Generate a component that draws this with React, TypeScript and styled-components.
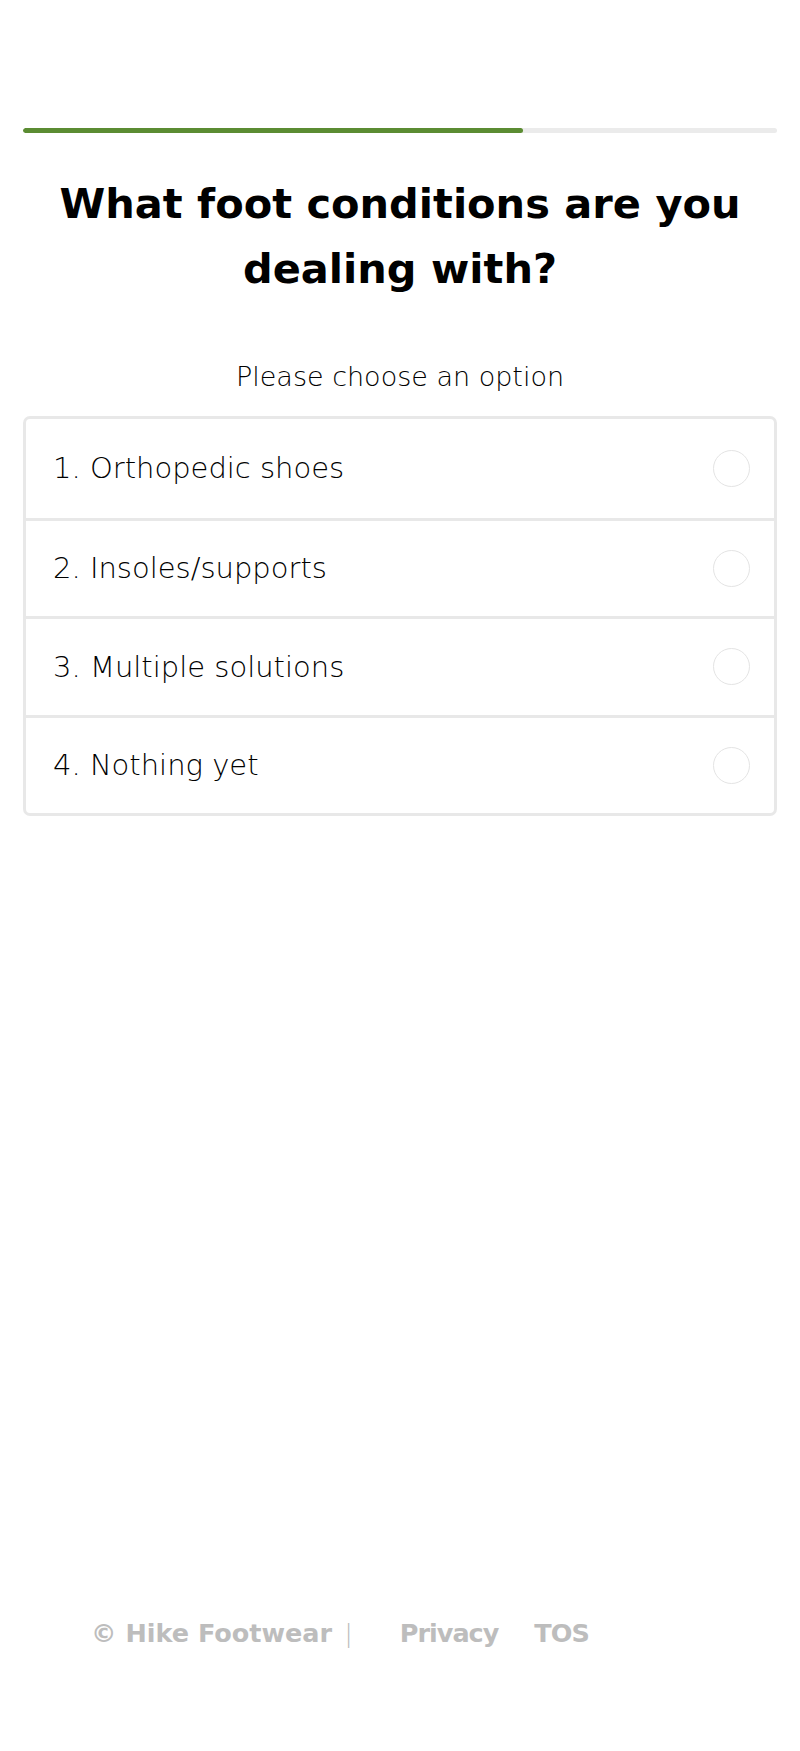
import React from 'react';
import styled, { createGlobalStyle } from 'styled-components';

const GlobalStyle = createGlobalStyle`
  * {
    box-sizing: border-box;
  }

  body {
    margin: 0;
    background: #ffffff;
    font-family: 'DejaVu Sans', 'Liberation Sans', sans-serif;
  }
`;

const options = ['Orthopedic shoes', 'Insoles/supports', 'Multiple solutions', 'Nothing yet'];

const App = () => {
  return (
    <PageLayout>
      <GlobalStyle />
      <QuizBox>
        <ProgressTrack>
          <ProgressFill style={{ width: `${(500 / 754) * 100}%` }} />
        </ProgressTrack>
        <Title>What foot conditions are you dealing with?</Title>
        <SubTitle>Please choose an option</SubTitle>
        <OptionList>
          {options.map((label, i) => (
            <OptionRow key={label}>
              <OptionLabel>
                {i + 1}. {label}
              </OptionLabel>
              <Radio />
            </OptionRow>
          ))}
        </OptionList>
      </QuizBox>
      <Footer>
        <Copyright>© Hike Footwear</Copyright>
        <Divider>|</Divider>
        <FooterLink>Privacy</FooterLink>
        <FooterLink>TOS</FooterLink>
      </Footer>
    </PageLayout>
  );
};

export default App;

const PageLayout = styled.main`
  min-height: 100vh;
  display: flex;
  flex-direction: column;
  padding: 128px 23px 103px;
`;

const QuizBox = styled.section`
  display: flex;
  flex-direction: column;
`;

const ProgressTrack = styled.div`
  width: 100%;
  height: 5px;
  border-radius: 3px;
  background: #ebebeb;
  overflow: hidden;
`;

const ProgressFill = styled.div`
  height: 100%;
  border-radius: 3px;
  background: #5b8c32;
`;

const Title = styled.h1`
  margin: 38px 10px 0;
  font-size: 41.5px;
  line-height: 65px;
  font-weight: 700;
  color: #000000;
  text-align: center;
`;

const SubTitle = styled.p`
  margin: 61px 0 24px;
  font-size: 27px;
  line-height: 30px;
  font-weight: 300;
  color: #000000;
  text-align: center;
`;

const OptionList = styled.ul`
  list-style: none;
  margin: 0;
  padding: 0;
  border: 3px solid #e8e8e8;
  border-radius: 7px;
  overflow: hidden;
`;

const OptionRow = styled.li`
  height: 98.5px;
  display: flex;
  align-items: center;
  justify-content: space-between;
  padding: 0 24px 0 27px;

  & + & {
    border-top: 3px solid #e8e8e8;
  }
`;

const OptionLabel = styled.span`
  font-size: 29px;
  font-weight: 300;
  color: #000000;
`;

const Radio = styled.span`
  width: 37px;
  height: 37px;
  border-radius: 50%;
  border: 1.5px solid #e4e4e4;
`;

const Footer = styled.footer`
  margin-top: auto;
  display: flex;
  align-items: center;
  padding-left: 68px;
  font-size: 25.5px;
  font-weight: 700;
  color: #bdbdbd;
`;

const Copyright = styled.span``;

const Divider = styled.span`
  margin: 0 47px 0 12px;
  font-weight: 300;
`;

const FooterLink = styled.a`
  margin-right: 36px;
  letter-spacing: -1px;
  color: inherit;
  text-decoration: none;
`;
